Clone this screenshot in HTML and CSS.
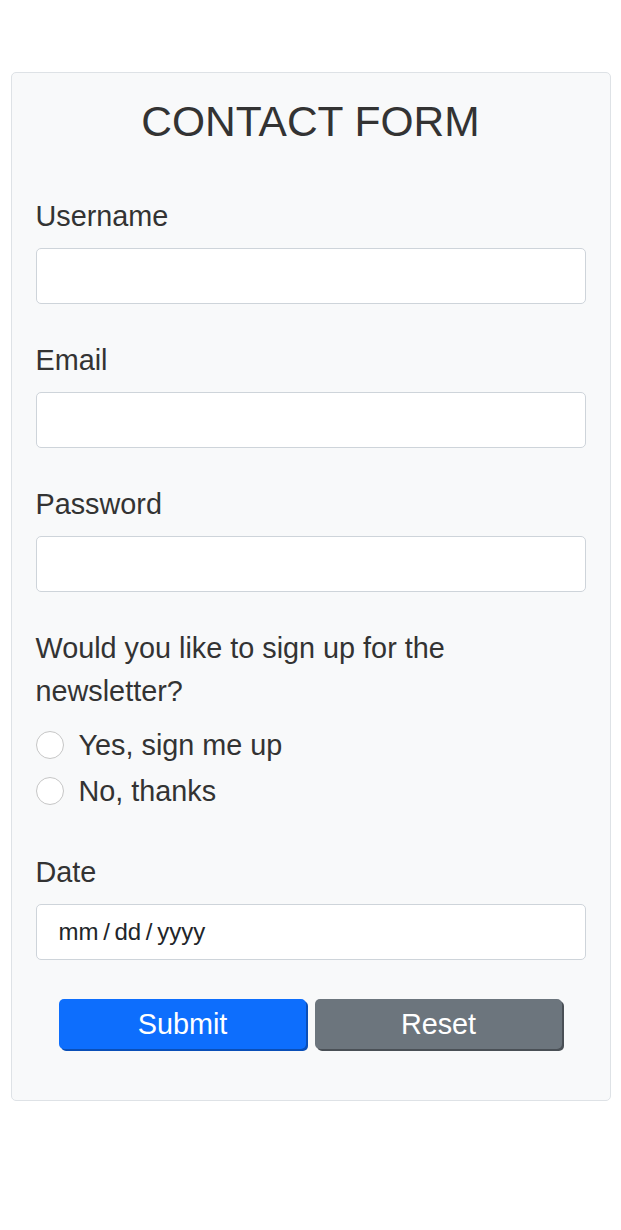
FILE: index.html
```html
<!DOCTYPE html>
<html lang="en">
<head>
<meta charset="utf-8">
<title>Contact Form</title>
<link rel="stylesheet" href="styles.css">
</head>
<body>
<form class="card">
  <h1 class="title">CONTACT FORM</h1>
  <div class="group">
    <label class="label" for="username">Username</label>
    <input class="field" id="username" type="text">
  </div>
  <div class="group">
    <label class="label" for="email">Email</label>
    <input class="field" id="email" type="email">
  </div>
  <div class="group">
    <label class="label" for="password">Password</label>
    <input class="field" id="password" type="password">
  </div>
  <div class="group radios">
    <p class="question">Would you like to sign up for the newsletter?</p>
    <label class="radio-row"><input class="radio" type="radio" name="nl"><span>Yes, sign me up</span></label>
    <label class="radio-row"><input class="radio" type="radio" name="nl"><span>No, thanks</span></label>
  </div>
  <div class="group date-group">
    <label class="label" for="date">Date</label>
    <div class="field date-field" id="date"><span>mm / dd / yyyy</span></div>
  </div>
  <div class="actions">
    <button class="btn btn-primary" type="button">Submit</button>
    <button class="btn btn-secondary" type="button">Reset</button>
  </div>
</form>
</body>
</html>
```
FILE: styles.css
```css
* { box-sizing: border-box; }
body {
  margin: 0;
  background: #ffffff;
  font-family: "Liberation Sans", Arial, sans-serif;
  color: #333333;
}
.card {
  width: 600px;
  margin: 72px auto 0;
  padding: 24px 24px 51px;
  background: #f8f9fa;
  border: 1px solid #dee2e6;
  border-radius: 5px;
}
.title {
  margin: 0 0 48px;
  font-size: 42.5px;
  line-height: 50px;
  font-weight: 400;
  text-align: center;
  color: #333333;
}
.group {
  margin-bottom: 35px;
}
.label {
  display: block;
  font-size: 28.8px;
  line-height: 43px;
  margin-bottom: 10px;
}
.field {
  display: block;
  width: 100%;
  height: 56px;
  margin: 0;
  padding: 0 22px;
  border: 1px solid #ced4da;
  border-radius: 5px;
  background: #ffffff;
  font-family: inherit;
  font-size: 24px;
  color: #212529;
}
.question {
  margin: 0 0 9px;
  font-size: 28.8px;
  line-height: 43px;
}
.radios {
  margin-bottom: 37px;
}
.radio-row {
  display: flex;
  align-items: center;
  height: 46px;
  font-size: 28.8px;
}
.radio {
  appearance: none;
  -webkit-appearance: none;
  width: 28px;
  height: 28px;
  margin: 0 15px 0 0;
  border: 1px solid #c6c6c6;
  border-radius: 50%;
  background: #ffffff;
  flex: none;
}
.date-group {
  margin-bottom: 39px;
}
.date-field {
  display: flex;
  align-items: center;
  word-spacing: -2px;
}
.actions {
  display: flex;
  justify-content: center;
  gap: 9px;
}
.btn {
  width: 247px;
  height: 50px;
  border: none;
  border-radius: 5px;
  color: #ffffff;
  font-family: inherit;
  font-size: 28.8px;
  padding: 0;
}
.btn-primary {
  background: #0d6efd;
  box-shadow: 2px 2px 0 #0a4fb8;
}
.btn-secondary {
  background: #6c757d;
  box-shadow: 2px 2px 0 #4a5056;
}
```
